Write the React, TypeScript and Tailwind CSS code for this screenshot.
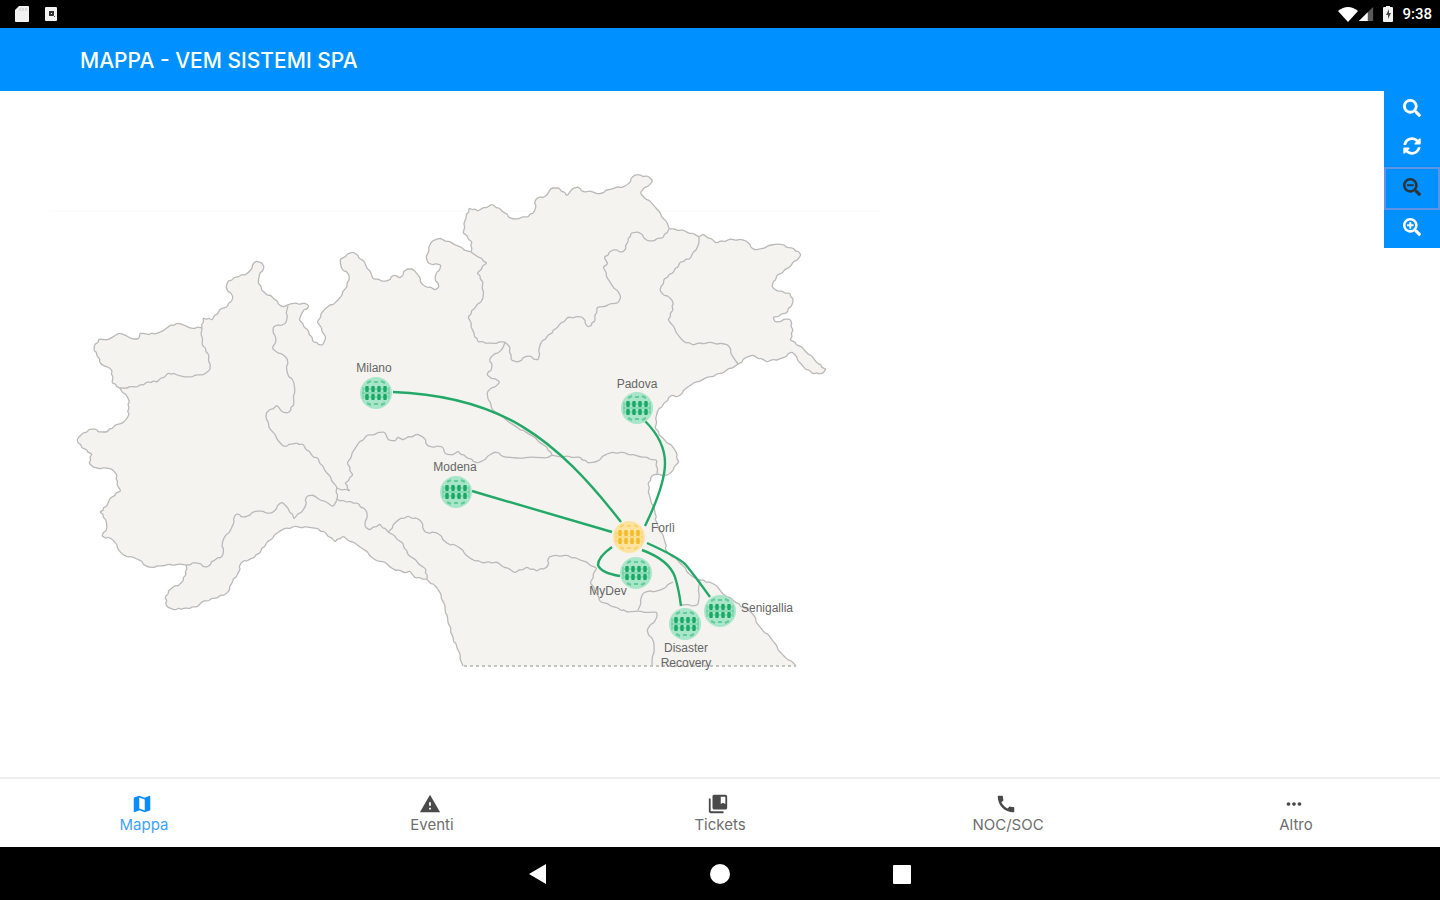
import { useState } from 'react'
import { clsx } from 'clsx'
import { MdCall, MdCollectionsBookmark, MdMap, MdMoreHoriz, MdWarning } from 'react-icons/md'
import { FaSearch, FaSearchMinus, FaSearchPlus, FaSyncAlt } from 'react-icons/fa'

// Starts at the right end of the southern cut and runs counter-clockwise
const OUTLINE =
  '796,666 783,655 772,640 760,627 752,613 745,608 735,602 722,593 717,586 710,582 700,580 693,577 680,563 667,552 665,542 657,523 655,513 650,497 648,483 653,475 668,475 679,462 675,450 663,438 655,428 657,413 664,403 672,395 677,397 688,387 707,377 723,373 738,364 ' +
  '747,357 753,355 767,362 782,358 792,352 802,365 813,374 823,373 826,369 817,363 802,347 790,340 793,330 790,319 775,322 773,317 787,313 793,302 790,293 777,291 772,287 777,275 790,267 801,255 793,248 778,244 755,250 746,241 730,239 716,243 703,234 699,237 683,230 669,229 ' +
  '667,222 655,207 640,193 653,181 648,176 635,175 627,185 612,189 598,194 590,191 585,192 577,187 572,189 567,196 559,188 551,188 547,195 536,199 535,210 528,217 513,219 503,212 492,204 478,211 469,208 466,218 463,233 472,242 471,252 ' +
  '455,245 440,238 432,241 426,257 428,263 441,265 435,277 439,287 435,290 423,285 418,275 413,269 407,269 400,278 395,275 387,281 373,279 364,261 353,252 340,259 341,267 349,275 347,287 338,300 325,309 317,322 326,337 323,345 313,342 308,330 299,320 302,313 309,306 305,303 290,304 283,307 ' +
  '273,298 265,293 258,283 259,277 264,267 262,263 256,261 249,272 238,277 228,281 226,287 233,297 227,307 220,309 212,320 203,318 202,328 ' +
  '190,328 184,325 177,323 168,327 163,331 155,334 146,334 140,333 139,339 132,339 125,335 119,333 113,337 107,340 99,339 94,347 97,356 102,365 110,368 113,377 112,383 120,388 ' +
  '128,398 129,408 128,417 123,423 115,425 107,432 102,432 93,429 83,433 77,439 82,448 92,454 89,463 93,467 112,469 117,475 117,485 121,491 110,498 107,506 100,512 106,520 107,527 102,536 112,539 122,554 137,559 148,567 163,566 180,564 186,565 ' +
  '186,575 181,583 172,588 165,597 167,607 175,610 185,608 197,607 203,601 217,598 227,593 232,583 238,573 241,563 250,559 260,553 267,542 280,531 295,526 313,528 325,532 335,542 343,536 360,547 377,561 385,562 390,567 405,573 410,571 415,578 427,579 ' +
  '437,588 445,605 448,623 453,637 457,648 463,666'

const BORDERS = [
  '202,328 202,345 209,355 210,370 203,375 185,377 177,375 168,373 157,382 147,382 137,387 120,388',
  '288,306 286,323 273,327 276,342 272,348 287,358 287,372 294,383 294,405 288,413 282,412 277,405 266,413 269,428 283,446 293,444 303,444 313,457 318,458 325,471 337,487 337,500 333,507 313,495 307,496 305,507 294,519 288,508 282,502 272,513 257,511 245,517 236,514 232,527 223,540 223,555 215,560 207,567 197,563 186,565',
  '337,488 350,491 345,483 353,475 347,463 356,447 367,435 385,432 388,440 395,441 398,437 403,440 417,434 423,437 428,446 443,447 445,454 453,455 458,451 467,458 478,463 495,452 505,457 547,458 552,455 560,457 580,457 588,463 595,462 607,454 623,452 640,457 657,460 657,474',
  '337,499 346,502 358,503 367,512 365,527 370,530 380,524 388,532 403,543 408,555 426,569 427,579',
  '388,532 397,521 408,516 420,520 425,532 437,533 447,543 457,546 470,558 483,563 497,562 515,573 527,567 537,571 547,567 549,557 567,555 580,560 597,568 590,583 598,595 600,602 618,608 627,612 657,612 657,617 647,630 654,643 652,666',
  '638,610 643,593 660,590 673,582',
  '700,580 698,605 682,605',
  '471,252 478,257 487,263 477,273 483,282 483,298 475,308 468,317 474,333 478,342 490,343 505,342 510,347 511,360 517,362 527,356 538,360 540,345 548,335 557,328 568,317 582,317 588,327 595,321 597,307 618,303 621,297 610,282 603,267 608,264 604,257 613,250 623,252 628,242 631,233 638,232 648,241 663,238 669,229',
  '505,342 503,348 490,358 492,367 487,375 500,382 487,392 492,410 517,427 527,433 547,447 552,455',
  '699,237 699,243 690,259 680,262 673,273 664,279 660,291 672,300 673,310 668,320 682,340 693,345 710,342 728,345 733,357 738,364',
]

const LINKS = [
  'M393 392 C500 396 555 437 621 522',
  'M645 421 Q665 441 665 463 Q665 485 645 526',
  'M472 491 L612 532',
  'M612 547 Q598 557 598 565 Q601 573 620 576',
  'M642 550 Q669 560 675 577 Q679 590 681 606',
  'M647 543 Q676 556 685 564 Q692 572 710 597',
]

interface Site {
  x: number
  y: number
  labelX: number
  labelY: number
  lines: string[]
  hub?: boolean
}

const SITES: Site[] = [
  { x: 376, y: 393, labelX: 374, labelY: 372, lines: ['Milano'] },
  { x: 637, y: 408, labelX: 637, labelY: 388, lines: ['Padova'] },
  { x: 456, y: 492, labelX: 455, labelY: 471, lines: ['Modena'] },
  { x: 629, y: 537, labelX: 663, labelY: 532, lines: ['Forlì'], hub: true },
  { x: 636, y: 573, labelX: 608, labelY: 595, lines: ['MyDev'] },
  { x: 685, y: 624, labelX: 686, labelY: 652, lines: ['Disaster', 'Recovery'] },
  { x: 720, y: 611, labelX: 767, labelY: 612, lines: ['Senigallia'] },
]

// Adds a small kink to every long segment and takes the edge off the corners
function borderPath(points: string) {
  const source = points.split(' ').map((point) => point.split(',').map(Number))
  const list: number[][] = []
  source.forEach(([x, y], i) => {
    list.push([x, y])
    if (i === source.length - 1) return
    const [nextX, nextY] = source[i + 1]
    const dx = nextX - x
    const dy = nextY - y
    const length = Math.hypot(dx, dy)
    if (length < 9) return
    const side = i % 2 === 0 ? 1 : -1
    list.push([x + dx * 0.4 - (dy / length) * side, y + dy * 0.4 + (dx / length) * side])
    list.push([x + dx * 0.6 + (dy / length) * side * 0.6, y + dy * 0.6 - (dx / length) * side * 0.6])
  })

  let d = `M${list[0][0]} ${list[0][1]}`
  for (let i = 1; i < list.length - 1; i++) {
    const [prevX, prevY] = list[i - 1]
    const [x, y] = list[i]
    const [nextX, nextY] = list[i + 1]
    d += ` L${x + (prevX - x) * 0.3} ${y + (prevY - y) * 0.3}`
    d += ` Q${x} ${y} ${x + (nextX - x) * 0.3} ${y + (nextY - y) * 0.3}`
  }
  const [endX, endY] = list[list.length - 1]
  return `${d} L${endX} ${endY}`
}

function Globe({ x, y, hub }: { x: number; y: number; hub?: boolean }) {
  const light = hub ? '#fde3a0' : '#a9e6c9'
  const mid = hub ? '#f9d36c' : '#62cb9a'
  const dark = hub ? '#f2bb2c' : '#1ba866'

  return (
    <g transform={`translate(${x} ${y})`}>
      <circle r="16" fill={light} />
      <path d="M-9 -10 L-5 -12 M-2 -11 H2 M5 -12 L9 -10 M-9 10 L-5 12 M-2 11 H2 M5 12 L9 10" stroke={mid} strokeWidth="2" />
      <path d="M-14 0 H14 M-12 -4 H12 M-12 4 H12 M-13 -6 V6 M13 -6 V6" stroke={mid} strokeWidth="1" />
      {[-9, -3, 3, 9].map((cx) => (
        <g key={cx} fill={dark}>
          <rect x={cx - 1.75} y={-7} width="3.5" height="6" rx="1" />
          <rect x={cx - 1.75} y={1} width="3.5" height="6" rx="1" />
        </g>
      ))}
    </g>
  )
}

function NetworkMap() {
  const coast = borderPath(OUTLINE)

  return (
    <svg viewBox="0 91 1384 686" className="block h-auto min-w-0 flex-1" role="img" aria-label="Mappa">
      <path d="M50 211 H880" stroke="#fafafa" />
      <path d={coast} fill="#f4f3ef" />
      <g fill="none" stroke="#b9b9b9" strokeWidth="1.3" strokeLinejoin="round">
        <path d={coast} />
        {BORDERS.map((points) => (
          <path key={points} d={borderPath(points)} />
        ))}
      </g>
      {/* the map is cut off along this line */}
      <path d="M464 666 H796" stroke="#c4c4c4" strokeWidth="2" strokeDasharray="3 3" />
      <g fill="none" stroke="#23a868" strokeWidth="2.4">
        {LINKS.map((d) => (
          <path key={d} d={d} />
        ))}
      </g>
      {SITES.map((site) => (
        <Globe key={site.lines[0]} x={site.x} y={site.y} hub={site.hub} />
      ))}
      <g className="font-['Liberation_Sans',sans-serif] text-[12px]" fill="#666666" textAnchor="middle">
        {SITES.map((site) =>
          site.lines.map((line, i) => (
            <text key={line} x={site.labelX} y={site.labelY + i * 15}>
              {line}
            </text>
          ))
        )}
      </g>
    </svg>
  )
}

const TOOLS = [
  { label: 'Cerca', icon: FaSearch },
  { label: 'Aggiorna', icon: FaSyncAlt },
  { label: 'Riduci', icon: FaSearchMinus },
  { label: 'Ingrandisci', icon: FaSearchPlus },
]

const TABS = [
  { label: 'Mappa', icon: MdMap },
  { label: 'Eventi', icon: MdWarning },
  { label: 'Tickets', icon: MdCollectionsBookmark },
  { label: 'NOC/SOC', icon: MdCall },
  { label: 'Altro', icon: MdMoreHoriz },
]

function StatusBar() {
  return (
    <div className="flex h-7 items-center justify-between bg-black pl-3.5 pr-2 text-white">
      <div className="flex items-center gap-3.5">
        <svg viewBox="0 0 16 16" className="h-4 w-4">
          <path d="M5 0 H14 Q15 0 15 1 V15 Q15 16 14 16 H2 Q1 16 1 15 V4 Z" fill="#f2f2f2" />
          <path d="M6 2 V5 M9 2 V5 M12 2 V5" stroke="#c4c4c4" />
        </svg>
        <svg viewBox="0 0 14 16" className="h-4 w-3.5">
          <rect x="1" y="1" width="12" height="14" rx="1" fill="#f2f2f2" />
          <rect x="5" y="5" width="5" height="5" fill="#333333" />
          <path d="M7 7 H8 V8 H7 Z" fill="#f2f2f2" />
          <path d="M9 9 L11 11" stroke="#555555" />
        </svg>
      </div>
      <div className="flex items-center">
        <svg viewBox="0 0 20 16" className="h-4 w-5">
          <path d="M0 5 Q10 -3 20 5 L10 16 Z" fill="#ffffff" />
        </svg>
        <svg viewBox="0 0 18 16" className="mr-2 h-4 w-4">
          <path d="M17 0 V16 H1 Z" fill="#5a5a5a" />
          <path d="M11 6 V16 H1 Z" fill="#ffffff" />
        </svg>
        <svg viewBox="0 0 12 16" className="mr-2 h-4 w-3">
          <path d="M3 1 H4 V0 H8 V1 H10 Q11 1 11 2 V15 Q11 16 10 16 H2 Q1 16 1 15 V2 Q1 1 2 1 Z" fill="#f2f2f2" />
          <path d="M7 3 L4 9 H6 V13 L9 7 H7 Z" fill="#444444" />
        </svg>
        <span className="font-[Roboto,sans-serif] text-[15px] font-medium leading-5">9:38</span>
      </div>
    </div>
  )
}

export default function App() {
  const [activeTab, setActiveTab] = useState('Mappa')
  const [activeTool, setActiveTool] = useState('Riduci')

  return (
    <div className="flex min-h-screen flex-col bg-white font-[Inter,sans-serif]">
      <StatusBar />
      <header className="flex h-[63px] items-center bg-[#0090ff] px-20 pt-0.5">
        <h1 className="text-[21px] font-medium leading-7 text-white">MAPPA - VEM SISTEMI SPA</h1>
      </header>

      <main className="flex flex-1 items-start">
        <NetworkMap />
        <div className="flex w-14 shrink-0 flex-col bg-[#0090ff]">
          {TOOLS.map(({ label, icon: Icon }) => (
            <button
              key={label}
              type="button"
              aria-label={label}
              onClick={() => setActiveTool(label)}
              className={clsx(
                'flex items-center justify-center pb-1',
                activeTool === label ? 'h-[43px] border-2 border-[#5f93e8] text-[#2b3238]' : 'h-[38px] text-white'
              )}
            >
              <Icon className="h-[18px] w-[18px]" />
            </button>
          ))}
        </div>
      </main>

      <nav className="grid h-[70px] grid-cols-5 border-t-2 border-[#eeeeee] bg-white pt-0.5">
        {TABS.map(({ label, icon: Icon }) => (
          <button
            key={label}
            type="button"
            onClick={() => setActiveTab(label)}
            className={clsx(
              'flex flex-col items-center justify-center',
              activeTab === label ? 'text-[#0a8cff]' : 'text-[#4a4a4a]'
            )}
          >
            <Icon className="mr-1 h-[22px] w-[22px]" />
            <span className="text-[15px] leading-5 opacity-80">{label}</span>
          </button>
        ))}
      </nav>

      <div className="flex h-[53px] items-center justify-center gap-40 bg-black">
        <button type="button" aria-label="Indietro">
          <svg viewBox="0 0 22 22" className="h-[22px] w-[22px]">
            <path d="M2 11 L19 1 V21 Z" fill="#ffffff" />
          </svg>
        </button>
        <button type="button" aria-label="Home">
          <svg viewBox="0 0 22 22" className="h-[22px] w-[22px]">
            <circle cx="11" cy="11" r="10" fill="#ffffff" />
          </svg>
        </button>
        <button type="button" aria-label="Recenti">
          <svg viewBox="0 0 22 22" className="h-[22px] w-[22px]">
            <rect x="2" y="2" width="18" height="19" rx="1" fill="#ffffff" />
          </svg>
        </button>
      </div>
    </div>
  )
}
